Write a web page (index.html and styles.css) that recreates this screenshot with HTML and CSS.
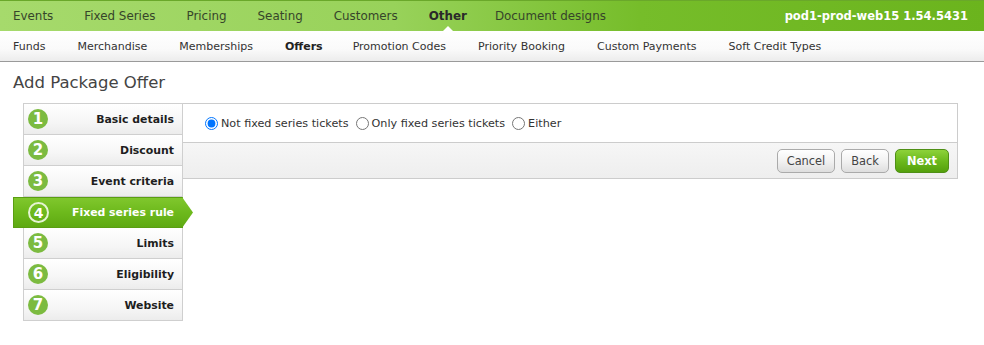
FILE: index.html
```html
<!DOCTYPE html>
<html>
<head>
<meta charset="utf-8">
<link rel="stylesheet" href="styles.css">
</head>
<body>
<div class="topnav">
  <div class="menu">
    <span class="item">Events</span>
    <span class="item">Fixed Series</span>
    <span class="item">Pricing</span>
    <span class="item">Seating</span>
    <span class="item">Customers</span>
    <span class="item active">Other</span>
    <span class="item">Document designs</span>
  </div>
  <div class="server">pod1-prod-web15 1.54.5431</div>
</div>
<div class="subnav">
  <span class="sub">Funds</span>
  <span class="sub">Merchandise</span>
  <span class="sub">Memberships</span>
  <span class="sub active">Offers</span>
  <span class="sub">Promotion Codes</span>
  <span class="sub">Priority Booking</span>
  <span class="sub">Custom Payments</span>
  <span class="sub">Soft Credit Types</span>
</div>
<h1 class="title">Add Package Offer</h1>
<div class="wizard">
  <ul class="steps">
    <li class="step"><span class="num">1</span><span class="label">Basic details</span></li>
    <li class="step"><span class="num">2</span><span class="label">Discount</span></li>
    <li class="step"><span class="num">3</span><span class="label">Event criteria</span></li>
    <li class="step current"><span class="num">4</span><span class="label">Fixed series rule</span></li>
    <li class="step"><span class="num">5</span><span class="label">Limits</span></li>
    <li class="step"><span class="num">6</span><span class="label">Eligibility</span></li>
    <li class="step"><span class="num">7</span><span class="label">Website</span></li>
  </ul>
  <div class="panel">
    <div class="panel-body">
      <label class="opt"><input type="radio" name="fs" checked>Not fixed series tickets</label>
      <label class="opt"><input type="radio" name="fs">Only fixed series tickets</label>
      <label class="opt"><input type="radio" name="fs">Either</label>
    </div>
    <div class="panel-foot">
      <button class="btn">Cancel</button>
      <button class="btn">Back</button>
      <button class="btn primary">Next</button>
    </div>
  </div>
</div>
</body>
</html>
```
FILE: styles.css
```css
* { box-sizing: border-box; }
body {
  margin: 0;
  font-family: "DejaVu Sans", Verdana, sans-serif;
  color: #333;
  background: #fff;
}
.topnav {
  height: 31px;
  display: flex;
  align-items: center;
  justify-content: space-between;
  background: linear-gradient(to right, #a6da6c 0%, #98d25a 40%, #76bd2a 65%, #6bb41d 100%);
  border-top: 1px solid #6aa82a;
  padding: 0 16px 0 13px;
}
.menu { display: flex; height: 100%; align-items: center; }
.item {
  font-size: 11.9px;
  color: #36452a;
  margin-right: 31px;
  position: relative;
  line-height: 30px;
}
.item.active { font-weight: bold; color: #2a2a2a; margin-right: 28px; }
.item.active::after {
  content: "";
  position: absolute;
  left: 50%;
  bottom: -1px;
  margin-left: -6px;
  border-left: 6px solid transparent;
  border-right: 6px solid transparent;
  border-bottom: 6px solid #fff;
}
.server {
  font-size: 11.5px;
  font-weight: bold;
  color: #fff;
}
.subnav {
  height: 31px;
  display: flex;
  align-items: center;
  padding-left: 13px;
  background: linear-gradient(to bottom, #ffffff 0%, #fafafa 60%, #ececec 100%);
  border-bottom: 1px solid #9a9a9a;
}
.sub {
  font-size: 11px;
  color: #333;
  margin-right: 32px;
}
.sub.active { font-weight: bold; color: #222; margin-right: 30px; }
.title {
  margin: 11px 0 0 13px;
  font-size: 16.5px;
  font-weight: normal;
  color: #444;
  line-height: 20px;
  height: 30px;
}
.wizard {
  display: flex;
  align-items: flex-start;
  padding-left: 13px;
}
.steps {
  list-style: none;
  margin: 0;
  padding: 0;
  width: 170px;
}
.step {
  height: 31px;
  margin-left: 10px;
  display: flex;
  align-items: center;
  justify-content: space-between;
  padding: 0 8px 0 4px;
  border: 1px solid #cfcfcf;
  border-top: none;
  background: linear-gradient(to bottom, #ffffff 0%, #f6f6f6 60%, #ececec 100%);
  position: relative;
}
.step:first-child { border-top: 1px solid #cfcfcf; height: 32px; }
.num {
  width: 20px;
  height: 20px;
  border-radius: 50%;
  background: #7cbb40;
  color: #fff;
  font-size: 15px;
  font-weight: bold;
  display: flex;
  align-items: center;
  justify-content: center;
  line-height: 1;
}
.label {
  font-size: 10.9px;
  font-weight: bold;
  color: #1e1e1e;
}
.step.current {
  margin-left: 0;
  padding-left: 14px;
  border: 1px solid #5a9e12;
  background: linear-gradient(to bottom, #80c72d 0%, #6db91c 50%, #5ea912 100%);
}
.step.current::after {
  content: "";
  position: absolute;
  right: -11px;
  top: -1px;
  width: 11px;
  height: 31px;
  background: linear-gradient(to bottom, #80c72d 0%, #6db91c 50%, #5ea912 100%);
  clip-path: polygon(0 0, 100% 50%, 0 100%);
}
.step.current .num {
  background: transparent;
  border: 2px solid #e6f4d4;
  color: #fff;
  font-size: 14px;
  width: 21px;
  height: 21px;
}
.step.current .label { color: #fff; }
.panel {
  width: 776px;
  margin-left: -1px;
  border: 1px solid #cccccc;
}
.panel-body {
  height: 39px;
  display: flex;
  align-items: center;
  padding-left: 22px;
  border-bottom: 1px solid #cccccc;
  background: #fff;
}
.opt {
  font-size: 11.2px;
  color: #333;
  display: flex;
  align-items: center;
  margin-right: 7px;
}
.opt input {
  margin: 0 3px 0 0;
  width: 13px;
  height: 13px;
}
.panel-foot {
  height: 35px;
  display: flex;
  align-items: center;
  justify-content: flex-end;
  gap: 6px;
  padding-right: 8px;
  background: linear-gradient(to bottom, #f6f6f6 0%, #eeeeee 100%);
}
.btn {
  font-family: "DejaVu Sans", Verdana, sans-serif;
  font-size: 11.4px;
  height: 24px;
  padding: 0 9px;
  border: 1px solid #aaaaaa;
  border-radius: 5px;
  color: #444;
  background: linear-gradient(to bottom, #ffffff 0%, #f2f2f2 50%, #dedede 100%);
}
.btn.primary {
  font-weight: bold;
  color: #fff;
  border-color: #4f8f16;
  background: linear-gradient(to bottom, #8dd23a 0%, #6cb91d 50%, #54a00c 100%);
  padding: 0 11px;
}
```
